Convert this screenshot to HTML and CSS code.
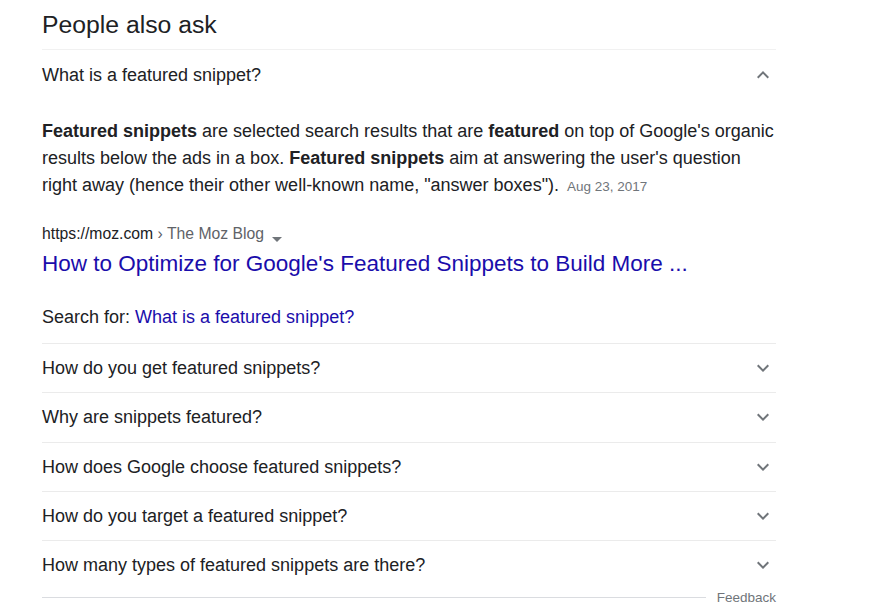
FILE: index.html
```html
<!DOCTYPE html>
<html>
<head>
<meta charset="utf-8">
<link rel="stylesheet" href="styles.css">
</head>
<body>
<div class="paa">
  <div class="heading">People also ask</div>
  <div class="row open">
    <span class="q">What is a featured snippet?</span>
    <svg class="chev" viewBox="0 0 24 24" width="24" height="24"><path d="M7.41 15.41L12 10.83l4.59 4.58L18 14l-6-6-6 6z"/></svg>
  </div>
  <div class="answer">
    <p class="text"><b>Featured snippets</b> are selected search results that are <b>featured</b> on top of Google's organic results below the ads in a box. <b>Featured snippets</b> aim at answering the user's question right away (hence their other well-known name, "answer boxes"). <span class="date">Aug 23, 2017</span></p>
    <div class="cite">https://moz.com <span class="crumb">› The Moz Blog</span> <span class="caret"></span></div>
    <a class="title" href="#">How to Optimize for Google's Featured Snippets to Build More ...</a>
    <div class="searchfor">Search for: <a href="#">What is a featured snippet?</a></div>
  </div>
  <div class="row"><span class="q">How do you get featured snippets?</span><svg class="chev" viewBox="0 0 24 24" width="24" height="24"><path d="M16.59 8.59L12 13.17 7.41 8.59 6 10l6 6 6-6z"/></svg></div>
  <div class="row"><span class="q">Why are snippets featured?</span><svg class="chev" viewBox="0 0 24 24" width="24" height="24"><path d="M16.59 8.59L12 13.17 7.41 8.59 6 10l6 6 6-6z"/></svg></div>
  <div class="row"><span class="q">How does Google choose featured snippets?</span><svg class="chev" viewBox="0 0 24 24" width="24" height="24"><path d="M16.59 8.59L12 13.17 7.41 8.59 6 10l6 6 6-6z"/></svg></div>
  <div class="row"><span class="q">How do you target a featured snippet?</span><svg class="chev" viewBox="0 0 24 24" width="24" height="24"><path d="M16.59 8.59L12 13.17 7.41 8.59 6 10l6 6 6-6z"/></svg></div>
  <div class="row last"><span class="q">How many types of featured snippets are there?</span><svg class="chev" viewBox="0 0 24 24" width="24" height="24"><path d="M16.59 8.59L12 13.17 7.41 8.59 6 10l6 6 6-6z"/></svg></div>
  <div class="footer"><div class="line"></div><span class="feedback">Feedback</span></div>
</div>
</body>
</html>
```
FILE: styles.css
```css
html, body {
  margin: 0;
  padding: 0;
  background: #fff;
}
body {
  font-family: "Liberation Sans", Arial, sans-serif;
  color: #202124;
}
.paa {
  width: 734px;
  margin-left: 42px;
}
.heading {
  height: 49px;
  display: flex;
  align-items: center;
  font-size: 24.75px;
  border-bottom: 1px solid #f1f1f1;
}
.row {
  height: 48.3px;
  display: flex;
  align-items: center;
  justify-content: space-between;
  border-bottom: 1px solid #ebebeb;
  font-size: 18px;
}
.row.open {
  height: 50px;
  border-bottom: none;
}
.row.last {
  border-bottom: none;
}
.q {
  line-height: 24px;
}
.chev {
  fill: #70757a;
  margin-right: 1px;
}
.answer {
  padding-top: 18px;
  padding-bottom: 12px;
  border-bottom: 1px solid #ebebeb;
}
.text {
  margin: 0;
  font-size: 18px;
  line-height: 27px;
}
.text b {
  font-weight: bold;
}
.date {
  font-size: 13.5px;
  color: #70757a;
  margin-left: 3px;
}
.cite {
  margin-top: 23px;
  font-size: 15.75px;
  line-height: 22px;
  color: #202124;
}
.crumb {
  color: #5f6368;
}
.caret {
  display: inline-block;
  width: 0;
  height: 0;
  border-left: 5px solid transparent;
  border-right: 5px solid transparent;
  border-top: 5px solid #70757a;
  margin-left: 4px;
  vertical-align: -3px;
}
.title {
  display: block;
  margin-top: 4px;
  font-size: 22.5px;
  line-height: 30px;
  color: #1a0dab;
  text-decoration: none;
}
.searchfor {
  margin-top: 25px;
  font-size: 18px;
  line-height: 27px;
}
.searchfor a {
  color: #1a0dab;
  text-decoration: none;
}
.footer {
  height: 16px;
  display: flex;
  align-items: center;
}
.line {
  flex: 1;
  height: 1px;
  background: #dadce0;
}
.feedback {
  margin-left: 11px;
  font-size: 13.5px;
  color: #70757a;
}
```
